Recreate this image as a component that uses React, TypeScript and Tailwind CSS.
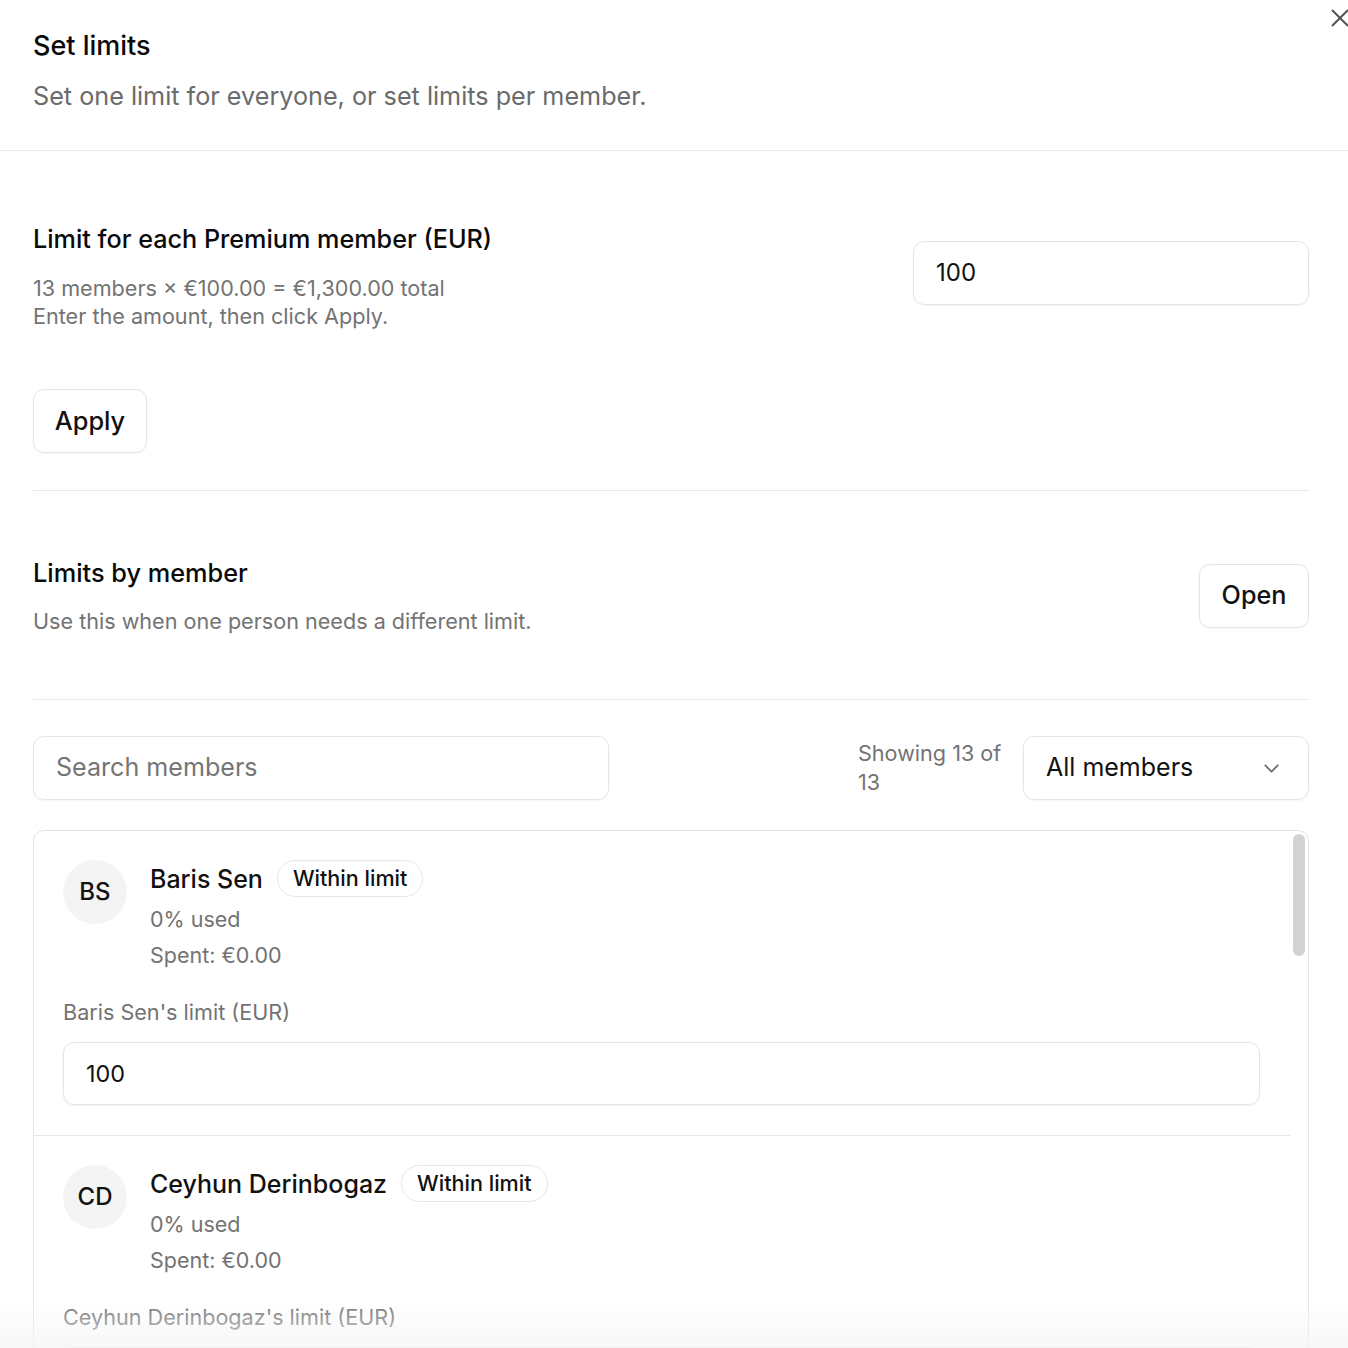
import React from "react";
import { X, ChevronDown } from "lucide-react";

type Member = { initials: string; name: string; limit: string };

const members: Member[] = [
  { initials: "BS", name: "Baris Sen", limit: "100" },
  { initials: "CD", name: "Ceyhun Derinbogaz", limit: "100" },
  { initials: "DE", name: "Deniz Ekinci", limit: "100" },
];

function MemberRow({ m, last }: { m: Member; last: boolean }) {
  return (
    <div className={`pl-[29px] pr-[30px] pt-[29px] pb-[30px] ${last ? "" : "border-b border-[#e8e8e8]"}`}>
      <div className="flex items-start gap-[23px]">
        <div className="w-[64px] h-[64px] rounded-full bg-[#f4f4f4] flex items-center justify-center text-[24px] font-medium text-[#111]">
          {m.initials}
        </div>
        <div className="flex flex-col">
          <div className="flex items-center gap-[14px] h-[37px]">
            <span className="text-[25px] font-medium text-[#111] leading-[32px]">{m.name}</span>
            <span className="h-[37px] px-[15px] rounded-full border border-[#e6e6e6] flex items-center text-[21.6px] font-medium text-[#111]">
              Within limit
            </span>
          </div>
          <div className="mt-[7px] text-[21.5px] leading-[30px] text-[#737373]">0% used</div>
          <div className="mt-[6px] text-[21.5px] leading-[30px] text-[#737373]">Spent: €0.00</div>
        </div>
      </div>
      <div className="mt-[28px] text-[21.6px] leading-[28px] text-[#737373]">{m.name}'s limit (EUR)</div>
      <div className="mt-[16px] h-[63px] rounded-[11px] border border-[#e5e5e5] shadow-[0_1px_2px_rgba(0,0,0,0.05)] flex items-center px-[22px] text-[23.4px] text-[#111]">
        {m.limit}
      </div>
    </div>
  );
}

export default function App() {
  return (
    <div
      className="relative h-screen overflow-hidden bg-white text-[#111]"
      style={{ fontFamily: "Inter, 'Noto Sans', sans-serif" }}
    >
      <button className="absolute left-[1325px] top-[3px] text-[#555]" aria-label="Close">
        <X size={30} strokeWidth={1.6} />
      </button>

      {/* Header */}
      <div className="border-b border-[#e8e8e8] pl-[33px] pt-[29px] pb-[38px]">
        <h1 className="text-[27px] leading-[34px] font-medium text-[#0a0a0a]">Set limits</h1>
        <p className="mt-[17px] text-[25.2px] leading-[32px] text-[#6b6b6b]">
          Set one limit for everyone, or set limits per member.
        </p>
      </div>

      <div className="pl-[33px] w-[1309px]">
        {/* Shared limit */}
        <div className="pt-[72px] pb-[37px] border-b border-[#e8e8e8]">
          <div className="flex items-start justify-between">
            <div>
              <h2 className="text-[25.2px] leading-[32px] font-medium text-[#0a0a0a]">
                Limit for each Premium member (EUR)
              </h2>
              <div className="mt-[19px] text-[21.6px] leading-[28px] text-[#737373]">
                <div>13 members × €100.00 = €1,300.00 total</div>
                <div>Enter the amount, then click Apply.</div>
              </div>
            </div>
            <div className="mt-[18px] w-[396px] h-[64px] rounded-[11px] border border-[#e5e5e5] shadow-[0_1px_2px_rgba(0,0,0,0.05)] flex items-center px-[22px] text-[24px] text-[#111]">
              100
            </div>
          </div>
          <button className="mt-[59px] h-[64px] w-[114px] rounded-[11px] border border-[#e5e5e5] shadow-[0_1px_2px_rgba(0,0,0,0.04)] text-[25.3px] font-medium text-[#111]">
            Apply
          </button>
        </div>

        {/* Per-member section */}
        <div className="pt-[66px] pb-[63px] border-b border-[#e8e8e8] flex items-center justify-between">
          <div>
            <h2 className="text-[25.3px] leading-[32px] font-medium text-[#0a0a0a]">Limits by member</h2>
            <p className="mt-[17px] text-[21.6px] leading-[30px] text-[#737373]">
              Use this when one person needs a different limit.
            </p>
          </div>
          <button className="mb-[2px] h-[64px] w-[110px] rounded-[11px] border border-[#e5e5e5] shadow-[0_1px_2px_rgba(0,0,0,0.04)] text-[25.2px] font-medium text-[#111]">
            Open
          </button>
        </div>

        {/* Search and filter */}
        <div className="pt-[36px] flex items-center justify-between">
          <div className="w-[576px] h-[64px] rounded-[11px] border border-[#e5e5e5] shadow-[0_1px_2px_rgba(0,0,0,0.05)] flex items-center px-[22px] text-[25.1px] text-[#757575]">
            Search members
          </div>
          <div className="flex items-center gap-[15px]">
            <div className="w-[150px] text-[21.6px] leading-[29px] text-[#737373]">Showing 13 of 13</div>
            <div className="w-[286px] h-[64px] rounded-[11px] border border-[#e5e5e5] shadow-[0_1px_2px_rgba(0,0,0,0.04)] flex items-center justify-between pl-[22px] pr-[24px] text-[25px] text-[#111]">
              <span>All members</span>
              <ChevronDown size={25} strokeWidth={1.5} className="text-[#666]" />
            </div>
          </div>
        </div>

        {/* Member list */}
        <div className="mt-[30px] rounded-[11px] border border-[#e5e5e5] flex overflow-hidden">
          <div className="flex-1">
            {members.map((m, i) => (
              <MemberRow key={m.initials} m={m} last={i === members.length - 1} />
            ))}
          </div>
          <div className="w-[18px] pt-[3px] flex justify-center">
            <div className="w-[12px] h-[122px] rounded-full bg-[#d1d2d4]" />
          </div>
        </div>
      </div>

      {/* Bottom fade */}
      <div className="pointer-events-none absolute left-0 right-0 bottom-0 h-[48px] bg-gradient-to-b from-white/0 to-[#f5f5f5]/80" />
    </div>
  );
}
